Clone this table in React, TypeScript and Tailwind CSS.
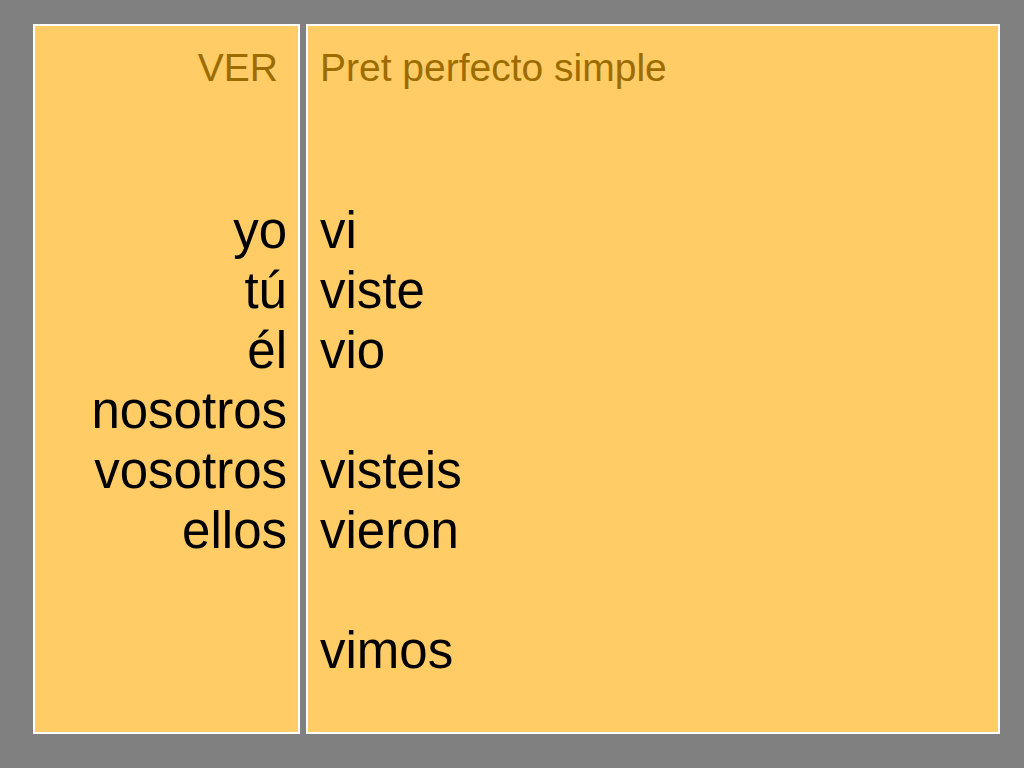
const leftRows = ['yo', 'tú', 'él', 'nosotros', 'vosotros', 'ellos'];
const rightRows = ['vi', 'viste', 'vio', '', 'visteis', 'vieron', '', 'vimos'];

export default function App() {
  return (
    <div
      className="w-[1024px] h-[768px] bg-[#808080] pl-[33px] pt-[24px] flex gap-[6px]"
      style={{ fontFamily: '"Liberation Sans", Arial, sans-serif' }}
    >
      <div className="w-[267px] h-[710px] bg-[#ffcc66] border-2 border-white pt-[20px] pr-[11px] text-right">
        <div className="text-[39px] leading-[44px] text-[#9c6c00] pr-[9px]">VER</div>
        <div className="mt-[111px] text-[51px] leading-[60px] text-black">
          {leftRows.map((r) => (
            <div key={r}>{r}</div>
          ))}
        </div>
      </div>
      <div className="w-[694px] h-[710px] bg-[#ffcc66] border-2 border-white pt-[20px] pl-[12px]">
        <div className="text-[39px] leading-[44px] text-[#9c6c00]">Pret perfecto simple</div>
        <div className="mt-[111px] text-[51px] leading-[60px] text-black">
          {rightRows.map((r, i) => (
            <div key={i} className="h-[60px]">{r}</div>
          ))}
        </div>
      </div>
    </div>
  );
}
